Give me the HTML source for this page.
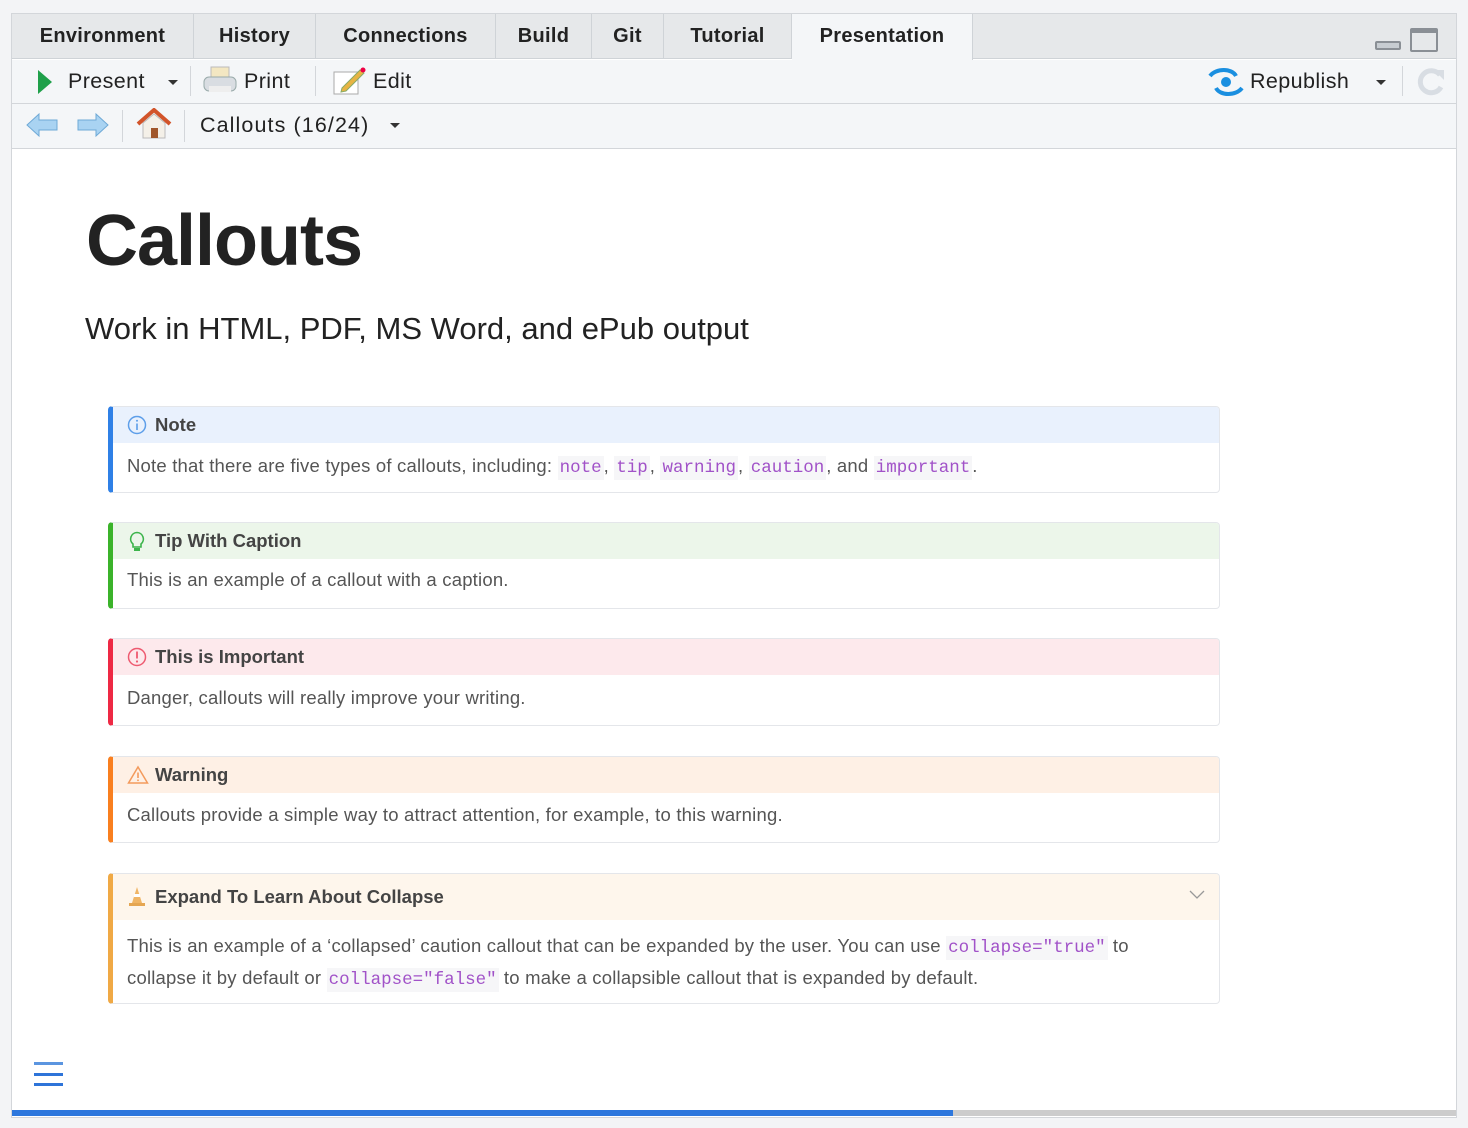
<!DOCTYPE html>
<html><head><meta charset="utf-8"><style>
*{margin:0;padding:0;box-sizing:border-box}
body{width:1468px;height:1128px;background:#f3f4f6;font-family:"Liberation Sans",sans-serif;position:relative;overflow:hidden}
.abs{position:absolute}
.panel{left:11px;top:13px;width:1446px;height:1105px;border:1px solid #d3d6da;background:#fff}
.tabs{left:12px;top:14px;width:1444px;height:45px;background:#e6e8ea;border-bottom:1px solid #cfd3d7}
.tab{position:absolute;top:0;height:45px;border-right:1px solid #cfd3d7;font-weight:bold;font-size:20px;color:#222;line-height:44px;text-align:center;letter-spacing:.3px}
.tb{left:12px;width:1444px;background:#f4f6f8;border-bottom:1px solid #d3d6da}
.t{position:absolute;font-size:21.5px;color:#222;letter-spacing:.4px}
.sep{position:absolute;width:1px;background:#d3d6da}
.co{position:absolute;left:108px;width:1112px;border:1px solid #e4e6ea;border-left:5px solid;border-radius:4px;overflow:hidden}
.co .h{height:36px;font-weight:bold;font-size:18.5px;color:#444;line-height:36px;padding-left:42px;position:relative}
.co .b{font-size:18.5px;color:#555;padding:11px 0 0 14px;line-height:30px;white-space:nowrap;letter-spacing:.2px}
.ic{position:absolute;left:14px;top:8px}
code{font-family:"Liberation Mono",monospace;font-size:17.5px;color:#a152c8;background:#f6f6f8;padding:2px 2px;letter-spacing:0}
</style></head><body>
<div class="abs panel"></div>
<div class="abs tabs">
<div class="tab" style="left:0;width:182px">Environment</div>
<div class="tab" style="left:182px;width:122px">History</div>
<div class="tab" style="left:304px;width:180px">Connections</div>
<div class="tab" style="left:484px;width:96px">Build</div>
<div class="tab" style="left:580px;width:72px">Git</div>
<div class="tab" style="left:652px;width:128px">Tutorial</div>
<div class="tab" style="left:780px;width:181px;background:#f4f6f8;height:46px">Presentation</div>
<div class="abs" style="left:1363px;top:27px;width:26px;height:9px;border:2px solid #8a8f95;border-radius:2px;background:#c7ccd1"></div>
<div class="abs" style="left:1398px;top:14px;width:28px;height:24px;border:2px solid #8a8f95;border-top-width:5px;border-radius:2px"></div>
</div>
<div class="abs tb" style="top:60px;height:44px">
<svg class="abs" style="left:26px;top:10px" width="14" height="24"><path d="M0 0 L14 12 L0 24Z" fill="#1fa04a"/></svg>
<div class="t" style="left:56px;top:9px">Present</div>
<svg class="abs" style="left:156px;top:20px" width="10" height="6"><path d="M0 0H10L5 5Z" fill="#333"/></svg>
<div class="sep" style="left:178px;top:6px;height:30px"></div>
<svg class="abs" style="left:191px;top:6px" width="34" height="30"><rect x="8" y="1" width="18" height="12" fill="#f3e7c2" stroke="#bbb"/><rect x="1" y="11" width="32" height="14" rx="5" fill="#d9dde2" stroke="#9aa"/><rect x="6" y="20" width="22" height="6" fill="#eee"/></svg>
<div class="t" style="left:232px;top:9px">Print</div>
<div class="sep" style="left:303px;top:6px;height:30px"></div>
<svg class="abs" style="left:320px;top:6px" width="36" height="32"><rect x="2" y="6" width="24" height="22" fill="#fff" stroke="#aaa"/><path d="M10 22 L28 4 L32 7 L14 25 L9 26Z" fill="#e8b443" stroke="#8a6"/><circle cx="31" cy="4" r="2.5" fill="#e04"/></svg>
<div class="t" style="left:361px;top:9px">Edit</div>
<svg class="abs" style="left:1196px;top:8px" width="36" height="28"><path d="M2 8 C8 0 24 0 28 8" stroke="#1a8fe0" stroke-width="4" fill="none"/><path d="M34 20 C28 28 12 28 8 20" stroke="#1a8fe0" stroke-width="4" fill="none"/><circle cx="18" cy="14" r="5" fill="#1a8fe0"/></svg>
<div class="t" style="left:1238px;top:9px">Republish</div>
<svg class="abs" style="left:1364px;top:20px" width="10" height="6"><path d="M0 0H10L5 5Z" fill="#333"/></svg>
<div class="sep" style="left:1390px;top:6px;height:30px"></div>
<svg class="abs" style="left:1404px;top:7px" width="30" height="30"><path d="M24 8 A11 11 0 1 0 25 20" stroke="#d8dde3" stroke-width="5" fill="none"/><path d="M18 3 L28 3 L28 13Z" fill="#d8dde3"/></svg>
</div>
<div class="abs tb" style="top:104px;height:45px">
<svg class="abs" style="left:13px;top:8px" width="34" height="26"><path d="M2 13 L14 2 V8 H32 V18 H14 V24Z" fill="#a9d3f2" stroke="#6ea9d6"/></svg>
<svg class="abs" style="left:64px;top:8px" width="34" height="26"><path d="M32 13 L20 2 V8 H2 V18 H20 V24Z" fill="#a9d3f2" stroke="#6ea9d6"/></svg>
<div class="sep" style="left:110px;top:6px;height:32px"></div>
<svg class="abs" style="left:124px;top:4px" width="36" height="32"><path d="M2 16 L18 2 L34 16" stroke="#d2542a" stroke-width="4" fill="none"/><path d="M7 15 V30 H29 V15 L18 6Z" fill="#f4f0e8" stroke="#bbb"/><rect x="15" y="20" width="7" height="10" fill="#a0562a"/></svg>
<div class="sep" style="left:172px;top:6px;height:32px"></div>
<div class="t" style="left:188px;top:9px;letter-spacing:1.1px">Callouts (16/24)</div>
<svg class="abs" style="left:378px;top:19px" width="10" height="6"><path d="M0 0H10L5 5Z" fill="#333"/></svg>
</div>
<div class="abs" style="left:86px;top:200px;font-size:72px;font-weight:bold;color:#222;letter-spacing:-1px">Callouts</div>
<div class="abs" style="left:85px;top:311px;font-size:31px;color:#222">Work in HTML, PDF, MS Word, and ePub output</div>

<div class="co" style="top:406px;height:87px;border-left-color:#2f80e6">
<div class="h" style="background:#e9f1fd"><svg class="ic" width="20" height="20"><circle cx="10" cy="10" r="8.5" stroke="#5d9ee9" stroke-width="1.5" fill="none"/><path d="M10 8.5V15" stroke="#5d9ee9" stroke-width="1.6"/><circle cx="10" cy="5.8" r="1" fill="#5d9ee9"/></svg>Note</div>
<div class="b" style="padding-top:8px">Note that there are five types of callouts, including: <code>note</code>, <code>tip</code>, <code>warning</code>, <code>caution</code>, and <code>important</code>.</div>
</div>
<div class="co" style="top:522px;height:87px;border-left-color:#3bb32a">
<div class="h" style="background:#ecf6ea"><svg class="ic" width="20" height="22"><path d="M10 1.5 A6.5 6.5 0 0 0 6 13 V16 H14 V13 A6.5 6.5 0 0 0 10 1.5Z" stroke="#3cb44b" stroke-width="1.6" fill="none"/><rect x="7" y="17" width="6" height="3" fill="#3cb44b"/></svg>Tip With Caption</div>
<div class="b" style="padding-top:6px">This is an example of a callout with a caption.</div>
</div>
<div class="co" style="top:638px;height:88px;border-left-color:#ee2944">
<div class="h" style="background:#fde9ec"><svg class="ic" width="20" height="20"><circle cx="10" cy="10" r="8.5" stroke="#ee5a70" stroke-width="1.5" fill="none"/><path d="M10 4.5V11.5" stroke="#ee5a70" stroke-width="1.8"/><circle cx="10" cy="14.5" r="1.1" fill="#ee5a70"/></svg>This is Important</div>
<div class="b" style="padding-top:8px">Danger, callouts will really improve your writing.</div>
</div>
<div class="co" style="top:756px;height:87px;border-left-color:#f97f1f">
<div class="h" style="background:#fef0e5"><svg class="ic" width="22" height="20"><path d="M11 2 L20.5 18 H1.5Z" stroke="#f39a5c" stroke-width="1.5" fill="none"/><path d="M11 7.5V13" stroke="#f39a5c" stroke-width="1.6"/><circle cx="11" cy="15.3" r="0.9" fill="#f39a5c"/></svg>Warning</div>
<div class="b" style="padding-top:7px">Callouts provide a simple way to attract attention, for example, to this warning.</div>
</div>
<div class="co" style="top:873px;height:131px;border-left-color:#f0a945">
<div class="h" style="background:#fef6ec;height:46px;line-height:46px"><svg class="ic" width="20" height="22" style="top:12px"><path d="M10 1 L15 17 H5Z" fill="#f0b565"/><rect x="2" y="17" width="16" height="3" fill="#e5a652"/><rect x="7" y="8" width="6" height="3" fill="#fff"/></svg>Expand To Learn About Collapse
<svg class="abs" style="right:14px;top:16px" width="16" height="10"><path d="M1 1 L8 8 L15 1" stroke="#999" stroke-width="1.3" fill="none"/></svg></div>
<div class="b" style="padding-top:11px">This is an example of a ‘collapsed’ caution callout that can be expanded by the user. You can use <code>collapse="true"</code> to<br>collapse it by default or <code>collapse="false"</code> to make a collapsible callout that is expanded by default.</div>
</div>

<div class="abs" style="left:34px;top:1062px;width:29px;height:3px;background:#5b95e0"></div>
<div class="abs" style="left:34px;top:1073px;width:29px;height:3px;background:#2e74d9"></div>
<div class="abs" style="left:34px;top:1083px;width:29px;height:3px;background:#2e74d9"></div>
<div class="abs" style="left:12px;top:1110px;width:1444px;height:6px;background:#cccccc"></div>
<div class="abs" style="left:12px;top:1110px;width:941px;height:6px;background:#2d77dd"></div>
</body></html>
